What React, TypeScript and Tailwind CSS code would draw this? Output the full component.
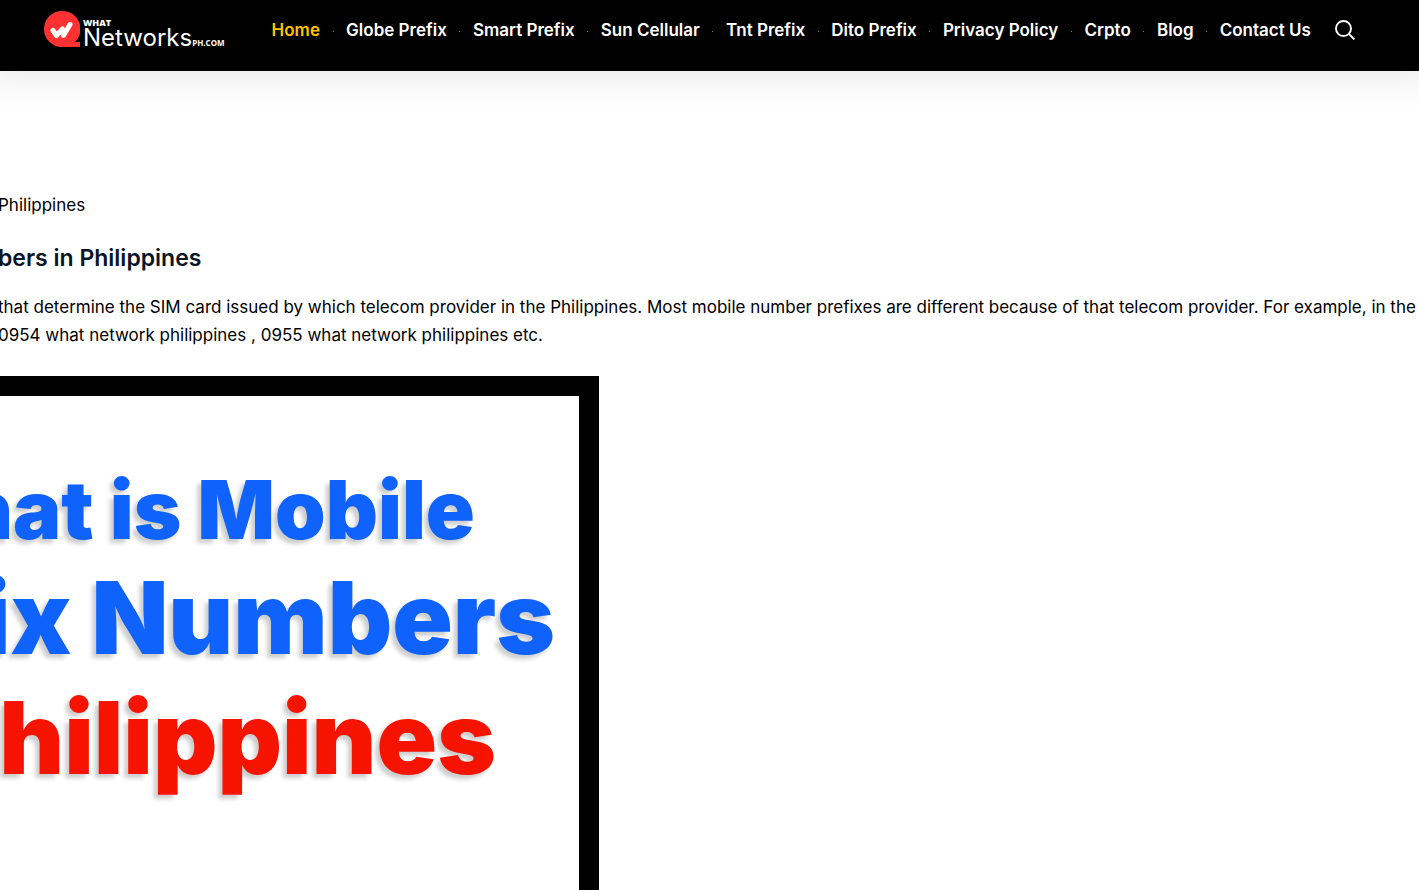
import { Fragment } from "react";

const navItems = [
  "Home",
  "Globe Prefix",
  "Smart Prefix",
  "Sun Cellular",
  "Tnt Prefix",
  "Dito Prefix",
  "Privacy Policy",
  "Crpto",
  "Blog",
  "Contact Us",
];

function Logo() {
  return (
    <a href="#" className="flex items-end gap-[3px] pb-0.5 text-white" aria-label="What Networks PH">
      <svg className="w-9 h-9 flex-shrink-0" viewBox="0 0 36 36" fill="none">
        <path d="M18 0a18 18 0 1 0 0 36h18v-5h-5A18 18 0 0 0 18 0Z" fill="#ff3131" />
        <path
          d="M9 19.5l3.5 5 6-6.5 1 6.5 6.5-11"
          stroke="#fff"
          strokeWidth="5"
          strokeLinecap="round"
          strokeLinejoin="round"
        />
      </svg>
      <span className="flex flex-col">
        <span className="font-['Open_Sans'] text-[9px] leading-3 font-extrabold">WHAT</span>
        <span className="flex items-baseline">
          <span className="font-[Inter] text-2xl leading-[18px]">Networks</span>
          <span className="font-['Open_Sans'] text-[8px] leading-2 font-bold">PH.COM</span>
        </span>
      </span>
    </a>
  );
}

function Header() {
  return (
    <header className="bg-black pb-[11px] shadow-[0_-20px_40px_20px_rgba(0,0,0,0.12)]">
      <div className="flex items-center h-[60px] pl-11 pr-16">
        <Logo />
        <nav className="flex-1 flex items-center justify-between ml-[47px] mr-6 pt-0.5 font-[Inter] text-[17px] font-semibold text-white whitespace-nowrap">
          {navItems.map((item, index) => (
            <Fragment key={item}>
              {index > 0 && <span className="w-px h-px bg-white/50" />}
              <a href="#" className={index === 0 ? "text-[#ffc300]" : "hover:text-[#ffc300]"}>
                {item}
              </a>
            </Fragment>
          ))}
        </nav>
        <button type="button" aria-label="Search" className="text-white">
          <svg className="w-5 h-5" viewBox="0 0 20 20" fill="none" stroke="currentColor" strokeWidth="1.9">
            <circle cx="8.5" cy="8.5" r="7.5" />
            <path d="M13.8 13.8l5.6 5.6" />
          </svg>
        </button>
      </div>
    </header>
  );
}

function PrefixBanner() {
  return (
    <figure className="flex justify-end w-[601px] h-[640px] border-20 border-l-0 border-black font-[Inter] font-black text-[#0f62fb] whitespace-nowrap [text-shadow:-4px_4px_4px_rgba(0,0,0,0.2)]">
      <div className="flex flex-col items-end pt-15">
        <span className="pr-[104px] text-[81px] leading-[108px]">hat is Mobile</span>
        <span className="pr-6 text-[100px] leading-[108px]">ix Numbers</span>
        <span className="pr-[83px] text-[100px] leading-[132px] text-[#f61400]">Philippines</span>
      </div>
    </figure>
  );
}

export default function App() {
  return (
    <div className="h-screen overflow-hidden bg-white text-black">
      <Header />
      {/* content runs past the left edge of the window */}
      <main className="-ml-0.5 pt-[120px] font-[Inter] text-[17px] leading-7 whitespace-nowrap">
        <p>Philippines</p>
        <h2 className="mt-6 text-[23px] leading-[30px] font-semibold text-[#0b1528]">bers in Philippines</h2>
        <p className="mt-5 mb-[27px]">
          that determine the SIM card issued by which telecom provider in the Philippines. Most mobile number prefixes
          are different because of that telecom provider. For example, in the
          <br />
          0954 what network philippines , 0955 what network philippines etc.
        </p>
        <PrefixBanner />
      </main>
    </div>
  );
}
